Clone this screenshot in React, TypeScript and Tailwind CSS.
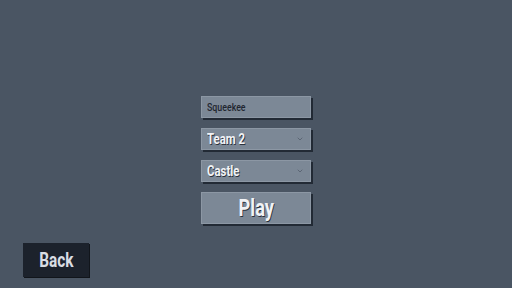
import { ChevronDown } from "lucide-react";

const font = { fontFamily: 'Roboto, "Liberation Sans", sans-serif' };

function SelectBox({ label }: { label: string }) {
  return (
    <div className="flex h-[22px] w-[110px] items-center justify-between bg-[#7c8896] pl-[5px] pr-[6px] border border-[#8c97a4] shadow-[2px_2px_0_#222a35]">
      <span className="inline-block origin-left scale-x-[0.76] text-[15px] font-bold text-[#f1f3f6] [text-shadow:1px_1px_0_#2a313c] leading-none">
        {label}
      </span>
      <ChevronDown className="h-[8px] w-[8px] text-[#4b5563]" strokeWidth={2} />
    </div>
  );
}

export default function App() {
  return (
    <div
      className="flex h-[288px] w-[512px] flex-col bg-[#4a5563] overflow-hidden"
      style={font}
    >
      {/* menu form */}
      <div className="flex flex-col items-center gap-[10px] pt-[96px]">
        <div className="flex h-[22px] w-[110px] items-center bg-[#7c8896] pl-[5px] border border-[#8c97a4] shadow-[2px_2px_0_#222a35]">
          <span className="inline-block origin-left scale-x-[0.8] text-[11px] font-medium text-[#1f2630] leading-none">
            Squeekee
          </span>
        </div>
        <SelectBox label="Team 2" />
        <SelectBox label="Castle" />
        <button className="flex h-[32px] w-[110px] items-center justify-center bg-[#7c8896] border border-[#8c97a4] shadow-[2px_2px_0_#222a35]">
          <span className="inline-block scale-x-[0.76] text-[24px] font-bold text-[#f1f3f6] [text-shadow:1px_1px_0_#2a313c] leading-none">
            Play
          </span>
        </button>
      </div>

      {/* back */}
      <div className="mt-auto mb-[11px] ml-[23px]">
        <button className="flex h-[34px] w-[66px] items-center justify-center bg-[#1c222c] shadow-[1px_1px_0_#11151b]">
          <span className="inline-block scale-x-[0.77] text-[20px] font-bold text-[#d9dde3] leading-none">
            Back
          </span>
        </button>
      </div>
    </div>
  );
}
